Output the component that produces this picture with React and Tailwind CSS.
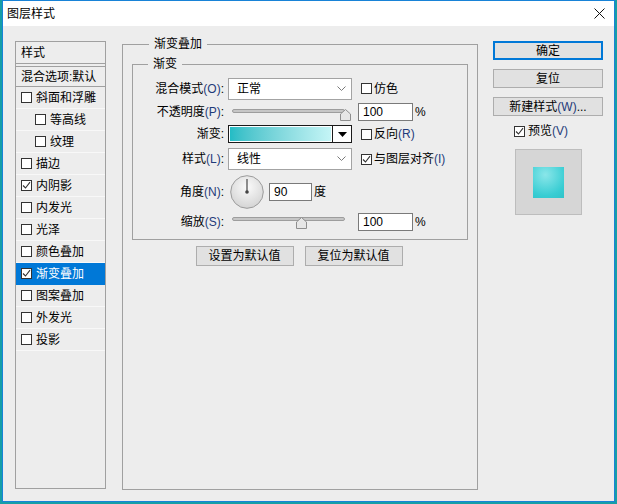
import React from 'react';

const font = "font-['Liberation_Sans','Noto_Sans_CJK_SC',sans-serif]";

// small square checkbox, optional tick
const Check = ({ checked }) => (
  <span className="w-[11px] h-[11px] border border-[#333] bg-white flex items-center justify-center shrink-0">
    {checked && (
      <svg width="9" height="9" viewBox="0 0 9 9">
        <path d="M1 4.5 L3.5 7 L8 1.2" stroke="#333" strokeWidth="1.1" fill="none" />
      </svg>
    )}
  </span>
);

const Key = ({ children }) => <span className="text-[#1f3b7a]">{children}</span>;

const Select = ({ value }) => (
  <div className="w-[124px] h-[22px] bg-white border border-[#a3a3a3] flex items-center justify-between pl-[8px] pr-[5px]">
    <span>{value}</span>
    <svg width="9" height="6" viewBox="0 0 9 6">
      <path d="M0.5 0.5 L4.5 4.5 L8.5 0.5" stroke="#7a7a7a" strokeWidth="1" fill="none" />
    </svg>
  </div>
);

const Slider = ({ pos, offset }) => (
  <div className={`relative w-[124px] h-[12px] ${offset}`}>
    <div className="absolute left-[4px] right-[7px] top-[0px] h-[4px] rounded-full bg-[#c6c6c6] border border-[#9d9d9d]" />
    <svg className="absolute top-[0px]" style={{ left: pos }} width="11" height="12" viewBox="0 0 11 12">
      <path d="M0.5 5 L5.5 0.5 L10.5 5 L10.5 11.5 L0.5 11.5 Z" fill="#e6e6e6" stroke="#8e8e8e" strokeWidth="1" />
    </svg>
  </div>
);

const Field = ({ w, children }) => (
  <div className={`${w} h-[18px] bg-white border border-[#7a7a7a] pl-[4px] flex items-center text-[12px]`}>
    {children}
  </div>
);

const Btn = ({ children, className = '', edge = 'border border-[#adadad]' }) => (
  <div className={`bg-[#e1e1e1] ${edge} flex items-center justify-center text-[12px] ${className}`}>
    {children}
  </div>
);

const Label = ({ children }) => (
  <div className="w-[92px] text-right pr-[1px] mr-[3px] shrink-0">{children}</div>
);

const styles = [
  { name: '斜面和浮雕', indent: false },
  { name: '等高线', indent: true },
  { name: '纹理', indent: true },
  { name: '描边' },
  { name: '内阴影', checked: true },
  { name: '内发光' },
  { name: '光泽' },
  { name: '颜色叠加' },
  { name: '渐变叠加', checked: true, active: true },
  { name: '图案叠加' },
  { name: '外发光' },
  { name: '投影' },
];

export default function App() {
  return (
    <div className={`w-[617px] h-[504px] bg-[#169ea7] overflow-hidden text-[12px] leading-[16px] text-black ${font}`}>
      <div className="ml-[2px] w-[613px] h-[502px] border border-[#1883d7] bg-[#ededed] flex flex-col">
        {/* title bar */}
        <div className="h-[25px] bg-white flex items-center justify-between pl-[4px] pr-[9px] shrink-0">
          <span>图层样式</span>
          <svg width="11" height="11" viewBox="0 0 11 11">
            <path d="M0.5 0.5 L10.5 10.5 M10.5 0.5 L0.5 10.5" stroke="#111" strokeWidth="1" />
          </svg>
        </div>

        <div className="flex items-start pl-[12px]">
          {/* styles list */}
          <div className="mt-[15px] w-[91px] h-[448px] border border-[#a0a0a0] flex flex-col">
            <div className="h-[22px] border-b border-[#a0a0a0] pl-[5px] flex items-center">样式</div>
            <div className="mt-[2px] h-[21px] border-t border-b border-[#a0a0a0] pl-[5px] flex items-center whitespace-nowrap overflow-hidden">
              混合选项:默认
            </div>
            {styles.map((s) => (
              <div
                key={s.name}
                className={`h-[22px] border-b flex items-center gap-[4px] ${s.indent ? 'pl-[19px]' : 'pl-[5px]'} ${
                  s.active ? 'bg-[#0078d7] text-white border-[#0078d7]' : 'border-[#f8f8f8]'
                }`}
              >
                <Check checked={s.checked} />
                <span>{s.name}</span>
              </div>
            ))}
          </div>

          {/* gradient overlay group */}
          <fieldset className="ml-[16px] mt-[10px] w-[356px] h-[454px] border border-[#a0a0a0] px-[9px]">
            <legend className="ml-[17px] px-[5px]">渐变叠加</legend>
            <fieldset className="mt-[4px] border border-[#a0a0a0] pt-[6px] pb-[6px]">
              <legend className="ml-[15px] px-[5px]">渐变</legend>

              <div className="h-[21px] flex items-center">
                <Label>混合模式<Key>(O)</Key>:</Label>
                <Select value="正常" />
                <div className="ml-[9px] flex items-center gap-[2px]">
                  <Check />
                  <span>仿色</span>
                </div>
              </div>

              <div className="h-[25px] flex items-center">
                <Label>不透明度<Key>(P)</Key>:</Label>
                <Slider pos={112} offset="mt-[6px]" />
                <div className="ml-[6px] flex items-center gap-[2px]">
                  <Field w="w-[55px]">100</Field>
                  <span>%</span>
                </div>
              </div>

              <div className="h-[20px] flex items-center">
                <Label>渐变:</Label>
                <div className="w-[124px] h-[18px] border border-[#1a1a1a] bg-white flex">
                  <div className="flex-1 m-[1px] bg-gradient-to-r from-[#22bcc5] to-[#c4f5f6]" />
                  <div className="w-[19px] border-l border-[#1a1a1a] flex items-center justify-center">
                    <svg width="9" height="5" viewBox="0 0 9 5">
                      <path d="M0 0 L9 0 L4.5 5 Z" fill="#000" />
                    </svg>
                  </div>
                </div>
                <div className="ml-[9px] flex items-center gap-[2px]">
                  <Check />
                  <span>反向<Key>(R)</Key></span>
                </div>
              </div>

              <div className="mt-[4px] h-[22px] flex items-center">
                <Label>样式<Key>(L)</Key>:</Label>
                <Select value="线性" />
                <div className="ml-[9px] flex items-center gap-[2px]">
                  <Check checked />
                  <span>与图层对齐<Key>(I)</Key></span>
                </div>
              </div>

              <div className="mt-[3px] h-[38px] flex items-center">
                <Label>角度<Key>(N)</Key>:</Label>
                <svg className="ml-[2px]" width="34" height="34" viewBox="0 0 34 34">
                  <defs>
                    <radialGradient id="dial" cx="50%" cy="35%" r="65%">
                      <stop offset="0%" stopColor="#fbfbfb" />
                      <stop offset="100%" stopColor="#d4d4d4" />
                    </radialGradient>
                  </defs>
                  <circle cx="17" cy="17" r="16.3" fill="url(#dial)" stroke="#9b9b9b" strokeWidth="1" />
                  <line x1="17" y1="17" x2="17" y2="4" stroke="#555" strokeWidth="1.3" />
                  <circle cx="17" cy="17" r="1.8" fill="#444" />
                </svg>
                <div className="ml-[5px]">
                  <Field w="w-[43px]">90</Field>
                </div>
                <span className="ml-[2px]">度</span>
              </div>

              <div className="h-[22px] flex items-center">
                <Label>缩放<Key>(S)</Key>:</Label>
                <Slider pos={68} offset="mt-[2px]" />
                <div className="ml-[6px] flex items-center gap-[2px]">
                  <Field w="w-[55px]">100</Field>
                  <span>%</span>
                </div>
              </div>
            </fieldset>

            <div className="mt-[6px] flex justify-center gap-[11px] pr-[2px]">
              <Btn className="w-[98px] h-[20px]">设置为默认值</Btn>
              <Btn className="w-[98px] h-[20px]">复位为默认值</Btn>
            </div>
          </fieldset>

          {/* right column */}
          <div className="ml-[15px] mt-[15px] w-[110px] flex flex-col">
            <Btn className="h-[19px]" edge="border-2 border-[#0078d7]">确定</Btn>
            <Btn className="mt-[9px] h-[19px]">复位</Btn>
            <Btn className="mt-[9px] h-[19px]">新建样式<Key>(W)</Key>...</Btn>
            <div className="mt-[7px] h-[16px] flex items-center gap-[3px] pl-[21px]">
              <Check checked />
              <span>预览<Key>(V)</Key></span>
            </div>
            <div className="mt-[10px] ml-[22px] w-[67px] h-[66px] bg-[#d6d6d6] border border-[#bdbdbd] flex items-center justify-center">
              <div className="w-[31px] h-[31px] bg-[radial-gradient(circle_at_40%_25%,#8ae6e9,#38cdd3_70%,#2fc3c9)]" />
            </div>
          </div>
        </div>
      </div>
    </div>
  );
}
